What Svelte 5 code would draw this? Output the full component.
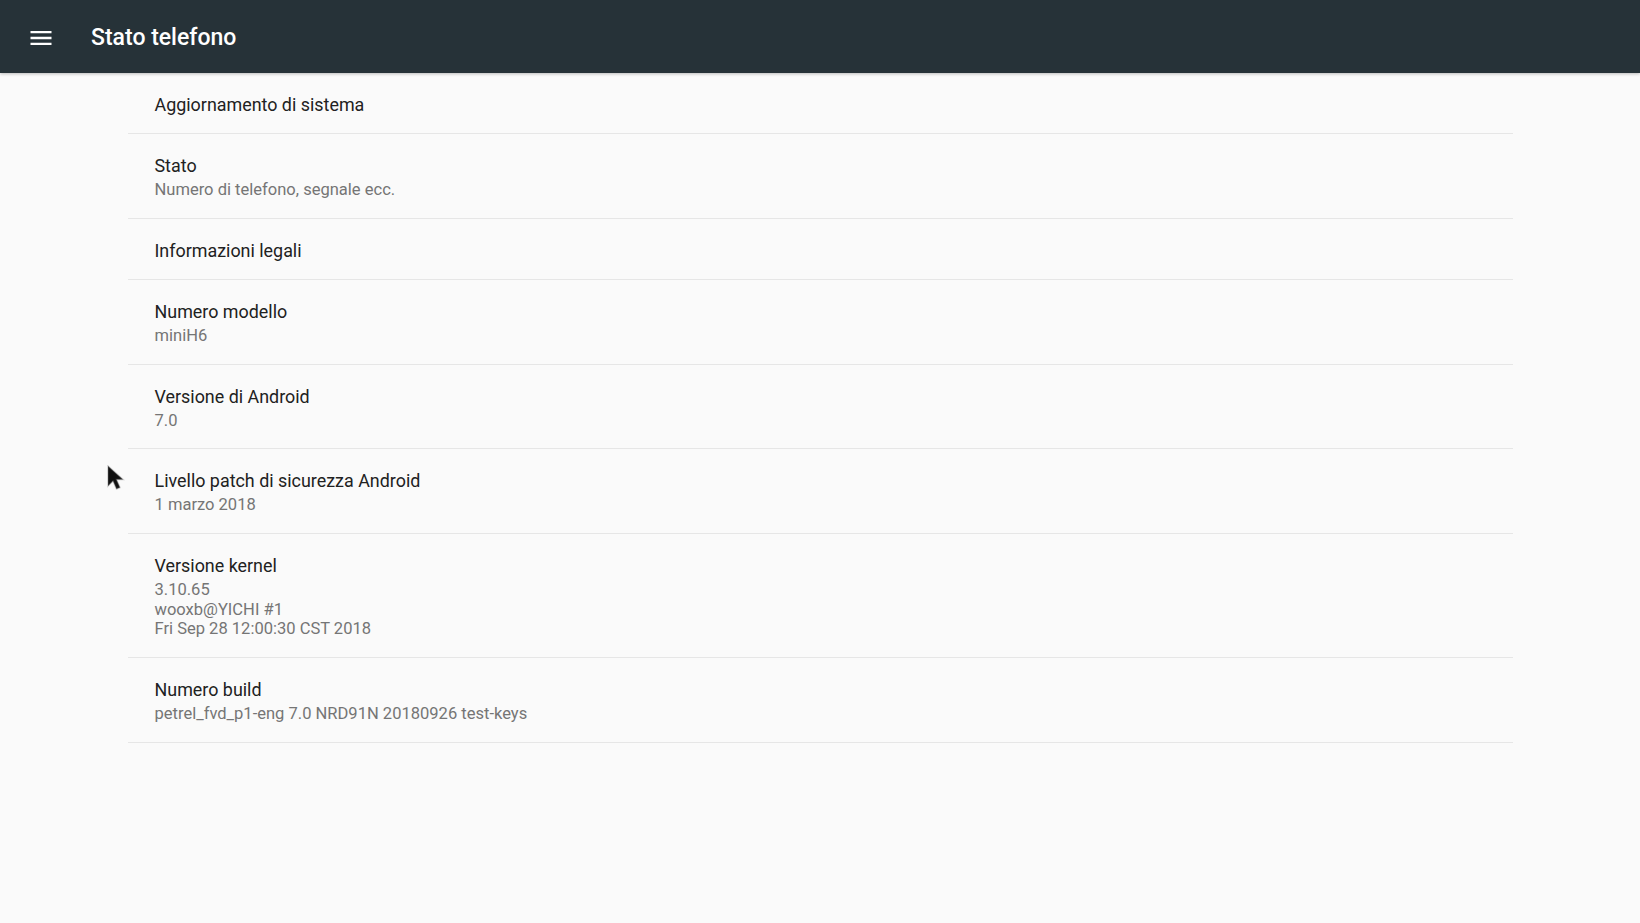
<script>
	const rows = [
		{ title: "Aggiornamento di sistema", lines: [] },
		{ title: "Stato", lines: ["Numero di telefono, segnale ecc."] },
		{ title: "Informazioni legali", lines: [] },
		{ title: "Numero modello", lines: ["miniH6"] },
		{ title: "Versione di Android", lines: ["7.0"] },
		{ title: "Livello patch di sicurezza Android", lines: ["1 marzo 2018"] },
		{ title: "Versione kernel", lines: ["3.10.65", "wooxb@YICHI #1", "Fri Sep 28 12:00:30 CST 2018"] },
		{ title: "Numero build", lines: ["petrel_fvd_p1-eng 7.0 NRD91N 20180926 test-keys"] }
	];
</script>

<div class="page">
	<header class="toolbar">
		<svg class="menu" width="28" height="28" viewBox="0 0 24 24" aria-hidden="true">
			<path d="M3 18h18v-2H3v2zm0-5h18v-2H3v2zm0-7v2h18V6H3z" fill="#fff" />
		</svg>
		<h1>Stato telefono</h1>
	</header>

	<main class="list">
		{#each rows as row (row.title)}
			<div class="row">
				<div class="title">{row.title}</div>
				{#if row.lines.length}
					<div class="summary">
						{#each row.lines as line}
							<div>{line}</div>
						{/each}
					</div>
				{/if}
			</div>
		{/each}
	</main>

	<svg class="cursor" width="20" height="28" viewBox="0 0 20 28" aria-hidden="true">
		<path d="M2 1v20l5-5 3.500 8 3.500-1.500-3.500-8H17z" fill="#111" stroke="#777" stroke-opacity=".35" stroke-width="1.500" />
	</svg>
</div>

<style>
	:global(body) {
		background: #fafafa;
	}

	.page {
		position: relative;
		height: 923px;
		overflow: hidden;
		background: #fafafa;
		font-family: Roboto, "Noto Sans", sans-serif;
	}

	.toolbar {
		display: flex;
		align-items: center;
		box-sizing: border-box;
		height: 73px;
		padding: 2px 0 0 27px;
		background: #263238;
		box-shadow: 0 1px 3px rgba(0, 0, 0, 0.25);
	}

	.menu {
		flex: none;
	}

	h1 {
		margin: 0 0 0 36px;
		color: #fff;
		font-size: 23px;
		font-weight: 500;
	}

	.list {
		display: flex;
		flex-direction: column;
		margin: 0 127px 0 127.5px;
	}

	.row {
		display: flex;
		flex-direction: column;
		padding: 20px 27px 16px;
		border-bottom: 1px solid #e6e6e6;
	}

	.title {
		color: #212121;
		font-size: 17.9px;
		line-height: 24px;
	}

	.summary {
		margin: 2px 0 2.3px;
		color: #757575;
		font-size: 16.55px;
		line-height: 19.5px;
	}

	.cursor {
		position: absolute;
		left: 106px;
		top: 465px;
	}
</style>
